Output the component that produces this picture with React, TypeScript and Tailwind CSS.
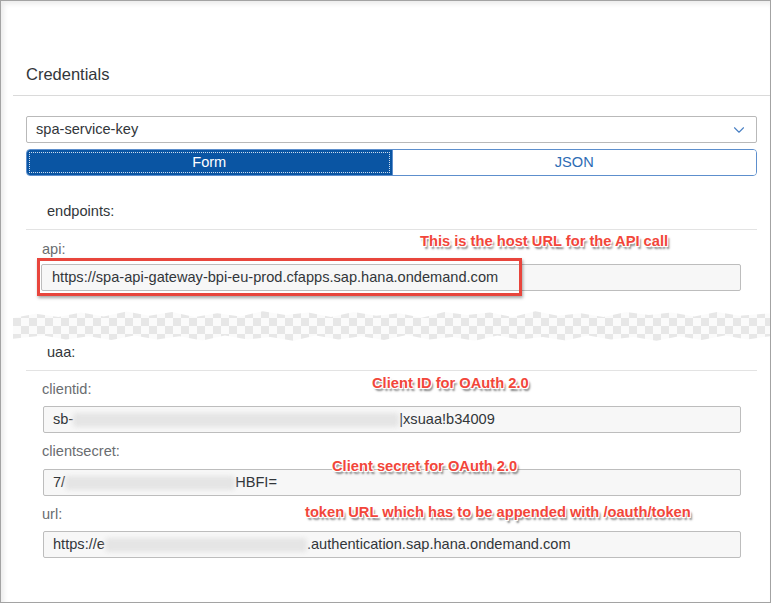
import { ChevronDown } from "lucide-react"

const note =
  "absolute whitespace-nowrap text-[14.7px] leading-[18px] font-bold text-[#f2463a] [text-shadow:-1px_-1px_0_#fff,1px_-1px_0_#fff,-1px_1px_0_#fff,1px_1px_0_#fff,0_-1px_0_#fff,0_1px_0_#fff,2px_3px_2px_rgba(0,0,0,0.5)]"

const label = "pl-[16px] text-[14.6px] leading-[20px] text-[#6a6d70]"
const input =
  "h-[27px] flex items-center bg-[#f7f7f7] border border-[#bdbdbd] rounded-[2px] text-[14.6px] text-[#32363a] whitespace-nowrap overflow-hidden"

function Smudge({ w }: { w: string }) {
  return <span className={`inline-block h-[14px] ${w} bg-[#e5e5e5] blur-[2px] rounded`} />
}

export default function App() {
  return (
    <div className="w-[772px] h-[604px] bg-white">
      <div className="relative w-[771px] h-[603px] border border-[#a3a3a3] bg-white overflow-hidden shadow-[inset_3px_3px_5px_rgba(0,0,0,0.08)] font-['Liberation_Sans',Arial,sans-serif]">
        {/* header */}
        <div className="h-[94px] pt-[63px] pl-[25px] text-[16.5px] leading-[20px] text-[#32363a]">Credentials</div>
        <div className="ml-[12px] h-px bg-[#dadada]" />

        <div className="pl-[25px] pr-[13px]">
          <div className="mt-[20px] h-[27px] flex items-center justify-between border border-[#b9b9b9] rounded-[2px] pl-[9px] pr-[8px] text-[14.6px] text-[#32363a]">
            <span>spa-service-key</span>
            <ChevronDown className="w-[18px] h-[18px] text-[#4a80c4]" strokeWidth={1.5} />
          </div>

          <div className="mt-[6px] h-[27px] grid grid-cols-2 rounded-[4px] overflow-hidden border border-[#5d8fcd] text-[14.6px]">
            <div className="flex items-center justify-center bg-[#0a55a3] text-white outline-1 outline-dotted outline-white/80 outline-offset-[-3px]">
              Form
            </div>
            <div className="flex items-center justify-center bg-white text-[#2d6bb4] border-l border-[#5d8fcd]">JSON</div>
          </div>

          <div className="pt-[25px] pl-[21px] text-[14.6px] leading-[20px] text-[#32363a]">endpoints:</div>
          <div className="mt-[8px] h-px bg-[#e3e3e3]" />

          <div className={`mt-[9px] ${label}`}>api:</div>
          <div className="relative mt-[5px] ml-[15px] mr-[16px]">
            <div className={`${input} pl-[10px]`}>https://spa-api-gateway-bpi-eu-prod.cfapps.sap.hana.ondemand.com</div>
            <div className="absolute -left-[4px] -top-[6px] w-[485px] h-[38px] border-[3px] border-[#e8453c] shadow-[1px_2px_3px_rgba(0,0,0,0.35)]" />
          </div>

          {/* torn transparency strip */}
          <div className="mt-[19px] -ml-[13px] -mr-[13px] h-[32px] bg-[conic-gradient(#e7e7e7_25%,#fbfbfb_0_50%,#e7e7e7_0_75%,#fbfbfb_0)] bg-[length:16px_16px] [clip-path:polygon(0_25%,3%_12%,6%_22%,9%_8%,12%_20%,15%_5%,18%_18%,21%_6%,24%_22%,27%_10%,30%_20%,33%_4%,36%_16%,39%_8%,42%_22%,45%_6%,48%_18%,51%_10%,54%_24%,57%_6%,60%_16%,63%_8%,66%_22%,69%_4%,72%_18%,75%_10%,78%_22%,81%_6%,84%_16%,87%_8%,90%_20%,93%_6%,96%_18%,100%_10%,100%_82%,97%_92%,94%_80%,91%_94%,88%_82%,85%_96%,82%_84%,79%_92%,76%_80%,73%_95%,70%_84%,67%_92%,64%_80%,61%_96%,58%_84%,55%_92%,52%_78%,49%_94%,46%_82%,43%_92%,40%_80%,37%_96%,34%_84%,31%_92%,28%_80%,25%_95%,22%_82%,19%_92%,16%_80%,13%_94%,10%_82%,7%_92%,4%_80%,0_90%)]" />

          <div className="pl-[21px] text-[14.6px] leading-[20px] text-[#32363a]">uaa:</div>
          <div className="mt-[8px] h-px bg-[#e3e3e3]" />

          <div className={`mt-[8px] ${label}`}>clientid:</div>
          <div className={`mt-[7px] ml-[17px] mr-[16px] pl-[9px] ${input}`}>
            <span>sb-</span>
            <Smudge w="w-[326px]" />
            <span>|xsuaa!b34009</span>
          </div>

          <div className={`mt-[8px] ${label}`}>clientsecret:</div>
          <div className={`mt-[8px] ml-[17px] mr-[16px] pl-[9px] ${input}`}>
            <span>7/</span>
            <Smudge w="w-[170px]" />
            <span>HBFI=</span>
          </div>

          <div className={`mt-[8px] ${label}`}>url:</div>
          <div className={`mt-[7px] ml-[17px] mr-[16px] pl-[9px] ${input}`}>
            <span>https://e</span>
            <Smudge w="w-[202px]" />
            <span>.authentication.sap.hana.ondemand.com</span>
          </div>
        </div>

        {/* annotations */}
        <div className={`${note} left-[419px] top-[231px]`}>This is the host URL for the API call</div>
        <div className={`${note} left-[371px] top-[373px]`}>Client ID for OAuth 2.0</div>
        <div className={`${note} left-[331px] top-[456px]`}>Client secret for OAuth 2.0</div>
        <div className={`${note} left-[304px] top-[502px]`}>token URL which has to be appended with /oauth/token</div>
      </div>
    </div>
  )
}
